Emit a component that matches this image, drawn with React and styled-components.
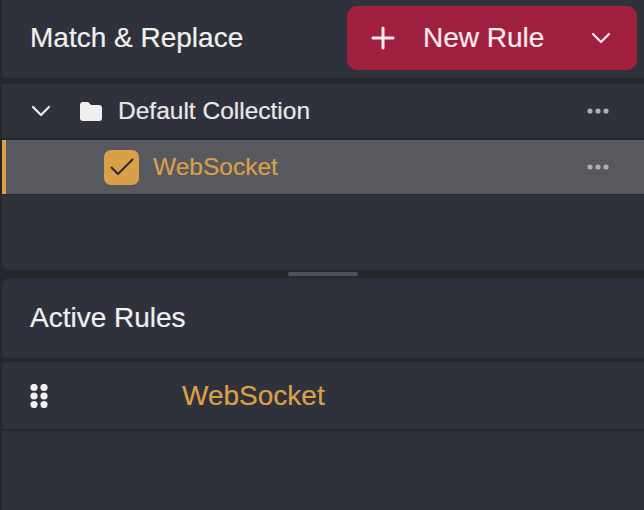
import React from "react";
import styled, { createGlobalStyle } from "styled-components";

const Global = createGlobalStyle`
  html, body { margin: 0; padding: 0; background: #25272b; }
  body { font-family: "Liberation Sans", Arial, sans-serif; -webkit-text-stroke: 0.2px currentColor; }
  #root { width: 644px; height: 510px; overflow: hidden; }
`;

const Page = styled.div`
  width: 644px;
  height: 510px;
  padding-left: 2px;
  box-sizing: border-box;
  display: flex;
  flex-direction: column;
  background: #25272b;
`;

const Panel = styled.section`
  flex: ${(p) => (p.$grow ? "1" : "none")};
  height: ${(p) => (p.$grow ? "auto" : "270px")};
  display: flex;
  flex-direction: column;
  background: #2f323a;
  border-radius: ${(p) => (p.$grow ? "8px 0 0 0" : "0 0 0 8px")};
  overflow: hidden;
`;

const Header = styled.header`
  height: ${(p) => p.$h}px;
  flex: none;
  display: flex;
  align-items: center;
  justify-content: space-between;
  padding: 0 7px 0 28px;
`;

const Title = styled.h2`
  margin: 0 0 ${(p) => p.$lift}px;
  font-size: 28px;
  font-weight: 400;
  color: #f0eff1;
`;

const NewRule = styled.button`
  width: 290px;
  height: 64px;
  margin-top: -3px;
  border: 0;
  border-radius: 10px;
  background: #a0213f;
  color: #fbeaed;
  font: 400 28px "Liberation Sans", Arial, sans-serif;
  -webkit-text-stroke: 0.2px currentColor;
  display: flex;
  align-items: center;
  padding: 0 25px 0 24px;
`;

const ButtonLabel = styled.span`
  margin-left: 28px;
  flex: 1;
  text-align: left;
`;

const Gap = styled.div`
  height: ${(p) => p.$h}px;
  flex: none;
  background: #25272b;
`;

const Row = styled.div`
  height: ${(p) => p.$h}px;
  flex: none;
  display: flex;
  align-items: center;
  box-sizing: border-box;
  padding-right: 35px;
  color: #efeef0;
  background: ${(p) => (p.$selected ? "#58595f" : "transparent")};
  border-left: ${(p) => (p.$selected ? "4px solid #d9a04a" : "0")};
  padding-left: ${(p) => p.$indent - (p.$selected ? 4 : 0)}px;
`;

const RowLabel = styled.span`
  font-size: ${(p) => p.$size}px;
  margin-left: ${(p) => p.$offset}px;
  flex: 1;
  color: ${(p) => (p.$accent ? "#d9a04a" : "#e9e8ea")};
`;

const FolderIcon = styled.svg`
  margin-left: 28px;
  flex: none;
`;

const Check = styled.span`
  width: 35px;
  height: 35px;
  flex: none;
  border-radius: 7px;
  background: #d9a04a;
  display: flex;
  align-items: center;
  justify-content: center;
`;

const Handle = styled.div`
  position: absolute;
  left: 288px;
  top: 272px;
  width: 70px;
  height: 4px;
  border-radius: 2px;
  background: #4f5157;
`;

const Chevron = ({ size = 22 }) => (
  <svg width={size} height={size} viewBox="0 0 22 22" fill="none" stroke="currentColor" strokeWidth="2.2" strokeLinecap="round" strokeLinejoin="round">
    <path d="M3 7l8 8 8-8" />
  </svg>
);

const Dots = () => (
  <svg width="22" height="6" viewBox="0 0 22 6" fill="#aeaeb2">
    <circle cx="3" cy="3" r="2.6" /><circle cx="11" cy="3" r="2.6" /><circle cx="19" cy="3" r="2.6" />
  </svg>
);

const Folder = () => (
  <FolderIcon width="22" height="19" viewBox="0 0 22 19" fill="#efeef0">
    <path d="M0 3a3 3 0 0 1 3-3h4.2c.8 0 1.5.3 2 .9L11 3h8a3 3 0 0 1 3 3v10a3 3 0 0 1-3 3H3a3 3 0 0 1-3-3z" />
  </FolderIcon>
);

const Grip = () => (
  <svg width="18" height="24" viewBox="0 0 18 24" fill="#f0eff1">
    {[3.5, 12, 20.5].map((y) => (
      <React.Fragment key={y}>
        <circle cx="4" cy={y} r="3.6" /><circle cx="14" cy={y} r="3.6" />
      </React.Fragment>
    ))}
  </svg>
);

export default function App() {
  return (
    <Page>
      <Global />
      <Panel>
        <Header $h={78}>
          <Title $lift={2}>Match &amp; Replace</Title>
          <NewRule>
            <svg width="24" height="24" viewBox="0 0 24 24" stroke="currentColor" strokeWidth="3" strokeLinecap="round"><path d="M12 2v20M2 12h20" /></svg>
            <ButtonLabel>New Rule</ButtonLabel>
            <Chevron />
          </NewRule>
        </Header>
        <Gap $h={6} />
        <Row $h={54} $indent={28}>
          <Chevron />
          <Folder />
          <RowLabel $size={24.5} $offset={16}>Default Collection</RowLabel>
          <Dots />
        </Row>
        <Gap $h={2} />
        <Row $h={54} $indent={102} $selected>
          <Check>
            <svg width="24" height="18" viewBox="0 0 24 18" fill="none" stroke="#2a2c32" strokeWidth="2" strokeLinecap="round" strokeLinejoin="round"><path d="M1.5 9.5l6.5 6.5L22.5 1.5" /></svg>
          </Check>
          <RowLabel $size={24.5} $offset={14} $accent>WebSocket</RowLabel>
          <Dots />
        </Row>
        <Gap $h={1} />
      </Panel>
      <Gap $h={8} />
      <Handle />
      <Panel $grow>
        <Header $h={80}>
          <Title $lift={0}>Active Rules</Title>
        </Header>
        <Gap $h={4} />
        <Row $h={67} $indent={28}>
          <Grip />
          <RowLabel $size={28} $offset={134} $accent>WebSocket</RowLabel>
        </Row>
        <Gap $h={2} />
      </Panel>
    </Page>
  );
}
